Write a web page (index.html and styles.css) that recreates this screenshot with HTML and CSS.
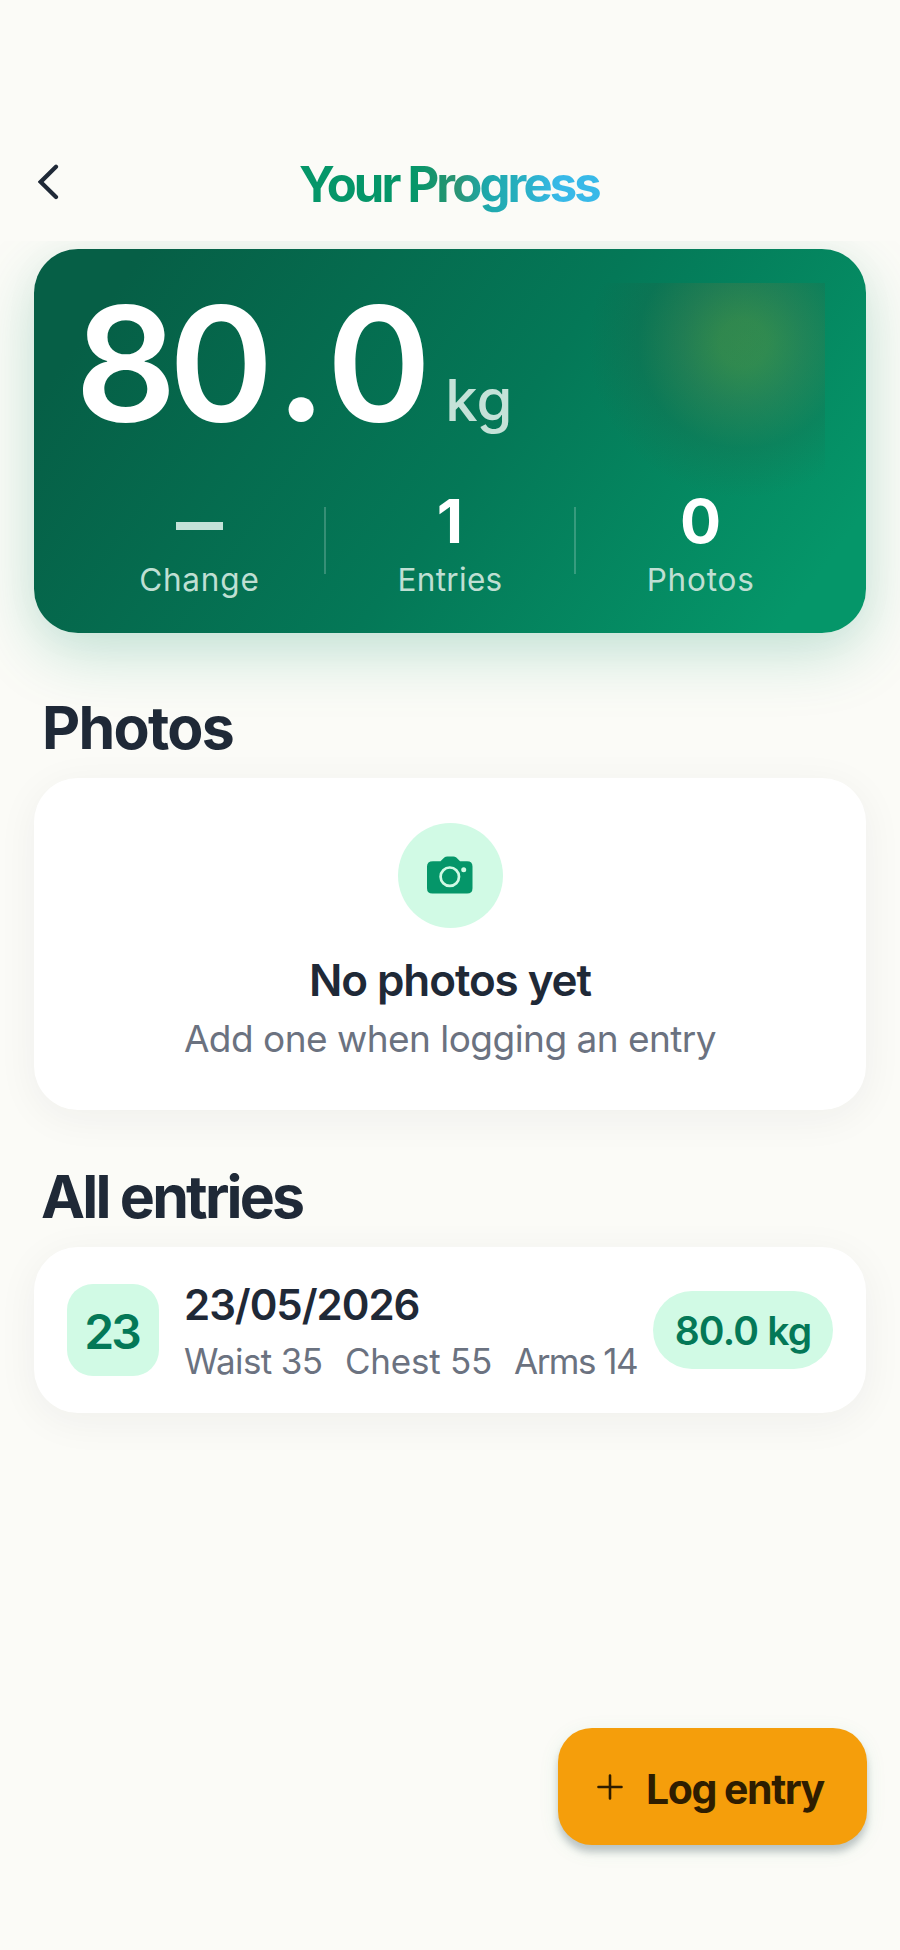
FILE: index.html
```html
<!DOCTYPE html>
<html lang="en">
<head>
<meta charset="utf-8">
<title>Your Progress</title>
<link rel="stylesheet" href="styles.css">
</head>
<body>
<div class="screen">
  <header class="appbar">
    <button class="back" aria-label="Back">
      <svg width="22" height="36" viewBox="0 0 22 36"><path d="M18 2.800 2.700 17.900 18 33" fill="none" stroke="#1f2937" stroke-width="4.200" stroke-linecap="round" stroke-linejoin="miter"/></svg>
    </button>
    <h1 class="title">Your Progress</h1>
  </header>
  <main class="content">
    <section class="hero">
      <div class="glow"></div>
      <div class="weight"><span class="value"><span>80</span><span class="dot">.</span><span>0</span></span><span class="unit">kg</span></div>
      <div class="stats">
        <div class="stat"><div class="num"><span class="dash"></span></div><div class="label change">Change</div></div>
        <div class="divider"></div>
        <div class="stat"><div class="num">1</div><div class="label entries">Entries</div></div>
        <div class="divider"></div>
        <div class="stat"><div class="num">0</div><div class="label">Photos</div></div>
      </div>
    </section>
    <h2 class="heading">Photos</h2>
    <section class="card empty">
      <div class="circle">
        <svg width="48" height="42" viewBox="0 0 48 42"><path d="M7 5.200h7.500l3.800-3.600Q19.600.500 21.400.500h5.800q1.800 0 3.100 1.100l3.800 3.600h7q5.400 0 5.400 5.400v21.600q0 5.300-5.400 5.300H6.400Q1 37.500 1 32.200V10.600Q1 5.200 7 5.200Z" fill="#059669"/><circle cx="23.800" cy="20.700" r="9.200" fill="none" stroke="#d1fae5" stroke-width="2.700"/><circle cx="37.700" cy="13.700" r="2.500" fill="#d1fae5"/></svg>
      </div>
      <div class="empty-title">No photos yet</div>
      <div class="empty-sub">Add one when logging an entry</div>
    </section>
    <h2 class="heading all">All entries</h2>
    <section class="card entry">
      <div class="day">23</div>
      <div class="info">
        <div class="date">23/05/2026</div>
        <div class="measures"><span class="waist">Waist 35</span><span class="chest">Chest 55</span><span class="arms">Arms 14</span></div>
      </div>
      <div class="pill">80.0 kg</div>
    </section>
  </main>
  <button class="fab">
    <svg width="26" height="26" viewBox="0 0 26 26"><path d="M13 1.500v23M1.500 13h23" stroke="#2e1d00" stroke-width="2.600" stroke-linecap="round"/></svg>
    <span>Log entry</span>
  </button>
</div>
</body>
</html>
```

FILE: styles.css
```css
* { box-sizing: border-box; }
body { margin: 0; background: #fbfbf7; font-family: Inter, "Liberation Sans", sans-serif; color: #1f2937; }
button { border: 0; padding: 0; background: none; font: inherit; }
h1, h2 { margin: 0; }
.screen { height: 1950px; display: flex; flex-direction: column; overflow: hidden; white-space: nowrap; }

.appbar { height: 241px; flex: none; padding: 129px 38px 0; display: grid; grid-template-columns: 60px 1fr 60px; align-items: center; }
.back { display: flex; margin-top: -6px; }
.title { justify-self: center; font-size: 49px; line-height: 72px; font-weight: 700; letter-spacing: -2.850px; padding-right: 2px;
  background: linear-gradient(90deg, #059669 0%, #059669 38%, #2b9473 52%, #1ea8ab 62%, #26aebd 72%, #38b9e8 86%); -webkit-background-clip: text; background-clip: text; color: transparent; }

.content { overflow: hidden; padding: 8px 34px 60px; flex: none; }
.hero { position: relative; height: 384px; border-radius: 44px; padding: 44px 41px 0; color: #fff;
  background: linear-gradient(126deg, #065f46 10%, #047857 54%, #059669 92%);
  box-shadow: 0 21px 63px rgba(5, 150, 105, .22), 0 5px 42px rgba(17, 24, 39, .03); }
.glow { position: absolute; top: 34px; right: 41px; width: 235px; height: 220px;
  background: radial-gradient(circle at 153px 60px, rgba(245, 158, 11, .19) 0, rgba(245, 158, 11, .18) 24px, rgba(180, 110, 40, .16) 60px, rgba(60, 70, 50, .13) 105px, rgba(10, 70, 60, 0) 155px); }
.weight { position: relative; display: flex; align-items: baseline; height: 140px; line-height: 141px; }
.value { display: flex; font-size: 159px; font-weight: 600; letter-spacing: -8px; }
.dot { margin: 0 8px 0 10px; }
.unit { margin-left: 22px; font-size: 58px; font-weight: 500; letter-spacing: 0; color: #c4e2d8; }
.stats { position: relative; margin-top: 58px; display: flex; align-items: flex-start; }
.stat { flex: 1; display: flex; flex-direction: column; align-items: center; }
.num { height: 60px; line-height: 60px; font-size: 61px; font-weight: 650; }
.dash { display: block; width: 47px; height: 8px; margin: 31px 0 0; background: #c4e2d8; }
.label { margin-top: 9px; font-size: 31.500px; line-height: 40px; letter-spacing: .8px; color: #bfdfd3; }
.entries { letter-spacing: .3px; }
.divider { width: 2px; height: 67px; margin-top: 16px; background: rgba(255, 255, 255, .2); }

.heading { margin: 59px 0 16px 8px; font-size: 59px; line-height: 71px; height: 70px; font-weight: 700; letter-spacing: -1.700px; }
.all { margin: 51px 0 15.500px 7px; letter-spacing: -2.800px; }
.card { background: #fff; border-radius: 44px; box-shadow: 0 8px 42px rgba(31, 41, 55, .055); }
.empty { height: 332px; padding-top: 45px; display: flex; flex-direction: column; align-items: center; }
.circle { width: 105px; height: 105px; border-radius: 50%; background: #d1fae5; display: flex; align-items: center; justify-content: center; }
.circle svg { margin-top: 2px; }
.empty-title { margin-top: 24.500px; font-size: 44px; line-height: 54px; font-weight: 600; letter-spacing: -1.100px; }
.empty-sub { margin-top: 9px; font-size: 37px; line-height: 46px; letter-spacing: -.530px; color: #6b7280; }

.entry { height: 166.500px; padding: 0 33px; display: flex; align-items: center; }
.day { width: 92px; height: 92px; border-radius: 26px; background: #d1fae5; color: #047857; font-size: 48px; font-weight: 600; letter-spacing: -3px; line-height: 96px; text-align: center; padding-right: 3px; }
.info { flex: 1; margin-left: 25px; padding-top: 7px; }
.date { font-size: 42px; line-height: 56px; font-weight: 600; letter-spacing: -1.040px; }
.measures { display: flex; font-size: 35px; line-height: 56px; color: #6b7280; }
.waist { width: 161px; letter-spacing: -.650px; }
.chest { width: 169px; letter-spacing: -.240px; }
.arms { width: 124px; letter-spacing: -1.510px; }
.pill { width: 180px; height: 78px; border-radius: 39px; background: #d1fae5; color: #047857; font-size: 39px; line-height: 79px; font-weight: 600; letter-spacing: -.810px; text-align: center; }

.fab { align-self: flex-end; flex: none; margin: auto 33.500px 105px 0; width: 308.500px; height: 117px; border-radius: 34px; background: #f59e0b; color: #2e1d00;
  display: flex; align-items: center; padding-left: 39px; box-shadow: 0 7px 7px rgba(31, 41, 55, .23), 0 5px 21px rgba(5, 150, 105, .09); }
.fab span { margin: 5px 0 0 23px; font-size: 41px; line-height: 56px; font-weight: 700; letter-spacing: -1.460px; }
```
